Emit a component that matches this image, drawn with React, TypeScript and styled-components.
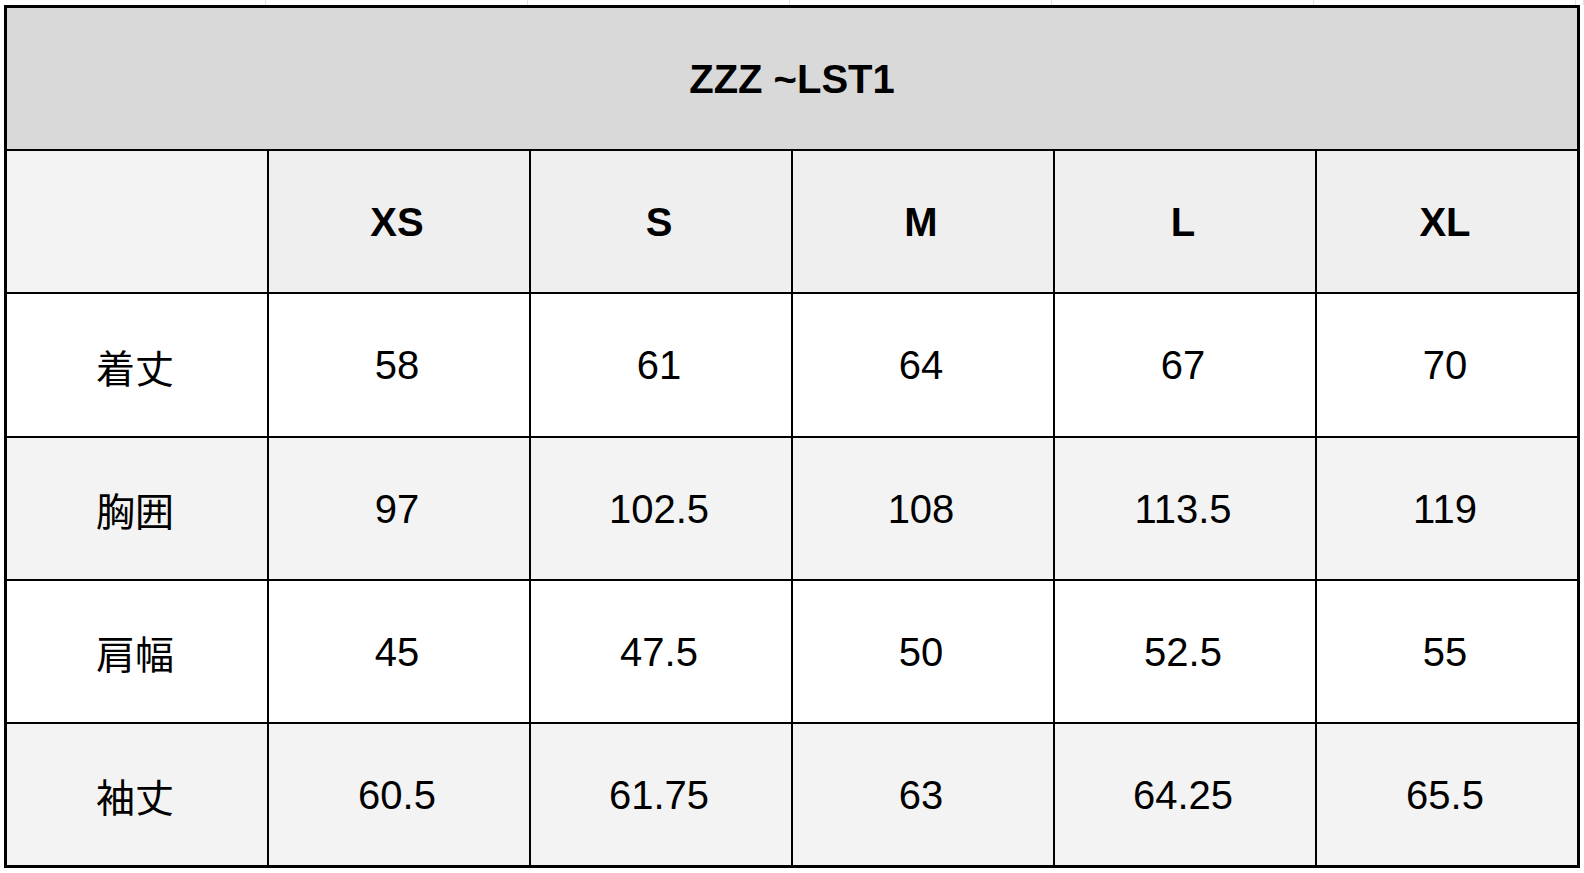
import React from "react";
import styled, { createGlobalStyle } from "styled-components";

const Global = createGlobalStyle`
  html, body { margin: 0; padding: 0; background: #ffffff; }
  body { font-family: "Liberation Sans", Arial, "Noto Sans CJK JP", sans-serif; }
`;

const Page = styled.div`
  width: 1584px;
  height: 873px;
  overflow: hidden;
  display: flex;
  flex-direction: column;
`;

const GridEdge = styled.div`
  height: 5px;
  display: grid;
  grid-template-columns: 266px repeat(5, 262px) 1fr;
`;

const EdgeCell = styled.div`
  border-right: 1px solid #e2e2e2;
`;

const Sheet = styled.div`
  margin-left: 4px;
  width: 1576px;
  height: 863px;
  box-sizing: border-box;
  border: 3px solid #000;
  background: #000;
  display: grid;
  grid-template-columns: repeat(6, 1fr);
  grid-template-rows: repeat(6, 1fr);
  gap: 2px;
`;

const Title = styled.div`
  grid-column: 1 / -1;
  background: #d9d9d9;
  display: flex;
  align-items: center;
  justify-content: center;
  font-weight: 700;
  font-size: 40px;
  color: #000;
  padding-top: 1px;
`;

const Cell = styled.div<{ $bg: string; $bold?: boolean }>`
  background: ${(p) => p.$bg};
  display: flex;
  align-items: center;
  justify-content: center;
  font-size: 40px;
  font-weight: ${(p) => (p.$bold ? 700 : 400)};
  color: #000;
  font-family: "Liberation Sans", Arial, "Noto Sans CJK JP", sans-serif;
  padding-top: 2px;
  padding-right: 4px;
`;

const Label = styled.span`
  font-family: "Noto Sans CJK JP", sans-serif;
  font-size: 39px;
`;

const sizes = ["XS", "S", "M", "L", "XL"];
const rows: { label: string; values: string[] }[] = [
  { label: "着丈", values: ["58", "61", "64", "67", "70"] },
  { label: "胸囲", values: ["97", "102.5", "108", "113.5", "119"] },
  { label: "肩幅", values: ["45", "47.5", "50", "52.5", "55"] },
  { label: "袖丈", values: ["60.5", "61.75", "63", "64.25", "65.5"] },
];

export default function App() {
  return (
    <Page>
      <Global />
      <GridEdge>
        {Array.from({ length: 7 }).map((_, i) => (
          <EdgeCell key={i} />
        ))}
      </GridEdge>
      <Sheet>
        <Title>ZZZ ~LST1</Title>
        <Cell $bg="#f3f3f3" />
        {sizes.map((s) => (
          <Cell key={s} $bg="#efefef" $bold>
            {s}
          </Cell>
        ))}
        {rows.map((r, i) => {
          const bg = i % 2 === 0 ? "#ffffff" : "#f3f3f3";
          return (
            <React.Fragment key={r.label}>
              <Cell $bg={bg}>
                <Label>{r.label}</Label>
              </Cell>
              {r.values.map((v, j) => (
                <Cell key={j} $bg={bg}>
                  {v}
                </Cell>
              ))}
            </React.Fragment>
          );
        })}
      </Sheet>
    </Page>
  );
}
